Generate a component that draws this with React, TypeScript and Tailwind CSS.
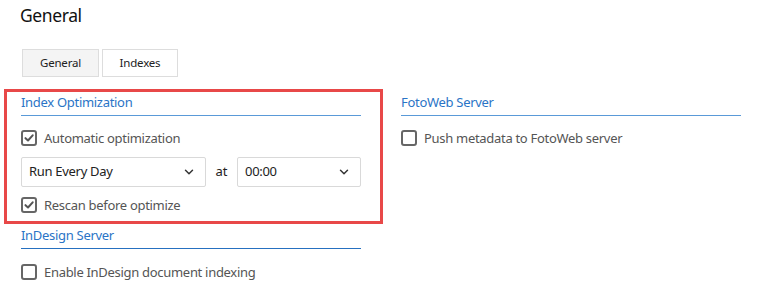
import { ChevronDown } from "lucide-react";

function CheckBox({ checked, label }: { checked?: boolean; label: string }) {
  return (
    <label className="flex h-4 items-center gap-[7px] text-[13px] tracking-[-0.3px] text-[#555]">
      <span className="flex h-4 w-4 shrink-0 items-center justify-center rounded-[3px] border-2 border-[#666] bg-white">
        {checked && (
          <svg viewBox="0 0 12 12" className="h-[10px] w-[10px]">
            <path d="M1.8 6.2 L4.8 9 L10.4 2.8" fill="none" stroke="#555" strokeWidth="2.4" strokeLinecap="round" strokeLinejoin="round" />
          </svg>
        )}
      </span>
      <span className="leading-4">{label}</span>
    </label>
  );
}

function SectionHeading({ title, dark }: { title: string; dark?: boolean }) {
  return (
    <div
      className={
        dark
          ? "h-[24px] border-b-[1.5px] border-[#2670c0] text-[13px] leading-[20px] tracking-[-0.3px] text-[#2a74c6]"
          : "h-[24px] border-b-[1.5px] border-[#5a9ad8] text-[13px] leading-[20px] tracking-[-0.3px] text-[#2a74c6]"
      }
    >
      {title}
    </div>
  );
}

function Select({ value, className }: { value: string; className: string }) {
  return (
    <div
      className={
        "flex h-[30px] items-center justify-between rounded-[2px] border border-[#d9d9d9] bg-white pl-[7px] pr-[9px] text-[13px] tracking-[-0.3px] text-[#222] " +
        className
      }
    >
      <span>{value}</span>
      <ChevronDown className="h-[14px] w-[14px] text-[#333]" strokeWidth={2.5} />
    </div>
  );
}

export default function App() {
  return (
    <div
      className="h-[308px] w-[758px] overflow-hidden bg-white"
      style={{ fontFamily: '"Noto Sans", "Open Sans", sans-serif' }}
    >
      <h1 className="pl-5 pt-[3px] text-[17.5px] leading-[24px] tracking-[-0.4px] text-[#111]">General</h1>

      {/* Tabs */}
      <div className="mt-[22px] flex gap-[3px] pl-[22px]">
        <button className="h-[28px] w-[77px] border border-[#ddd] bg-[#f4f4f4] text-[11.5px] tracking-[-0.2px] text-[#222]">
          General
        </button>
        <button className="h-[28px] w-[76px] border border-[#ddd] bg-white text-[11.5px] tracking-[-0.2px] text-[#222]">
          Indexes
        </button>
      </div>

      <div className="mt-[14px] flex gap-[40px] pl-[21px]">
        {/* Left column */}
        <div className="w-[340px]">
          <div className="relative">
            <div className="pointer-events-none absolute -left-[17px] -right-[22px] -top-[2px] -bottom-[11px] border-[3px] border-[#e84848]" />
            <div className="pt-[1px]">
              <SectionHeading title="Index Optimization" />
            </div>
            <div className="mt-[14px]">
              <CheckBox checked label="Automatic optimization" />
            </div>
            <div className="mt-[11px] flex items-center">
              <Select value="Run Every Day" className="w-[185px]" />
              <span className="w-[31px] text-center text-[13px] text-[#222]">at</span>
              <Select value="00:00" className="w-[124px]" />
            </div>
            <div className="mt-[10px]">
              <CheckBox checked label="Rescan before optimize" />
            </div>
          </div>
          <div className="mt-[12px]">
            <SectionHeading title="InDesign Server" dark />
          </div>
          <div className="mt-[15px]">
            <CheckBox label="Enable InDesign document indexing" />
          </div>
        </div>

        {/* Right column */}
        <div className="w-[340px]">
          <div className="pt-[1px]">
            <SectionHeading title="FotoWeb Server" />
          </div>
          <div className="mt-[14px]">
            <CheckBox label="Push metadata to FotoWeb server" />
          </div>
        </div>
      </div>
    </div>
  );
}
